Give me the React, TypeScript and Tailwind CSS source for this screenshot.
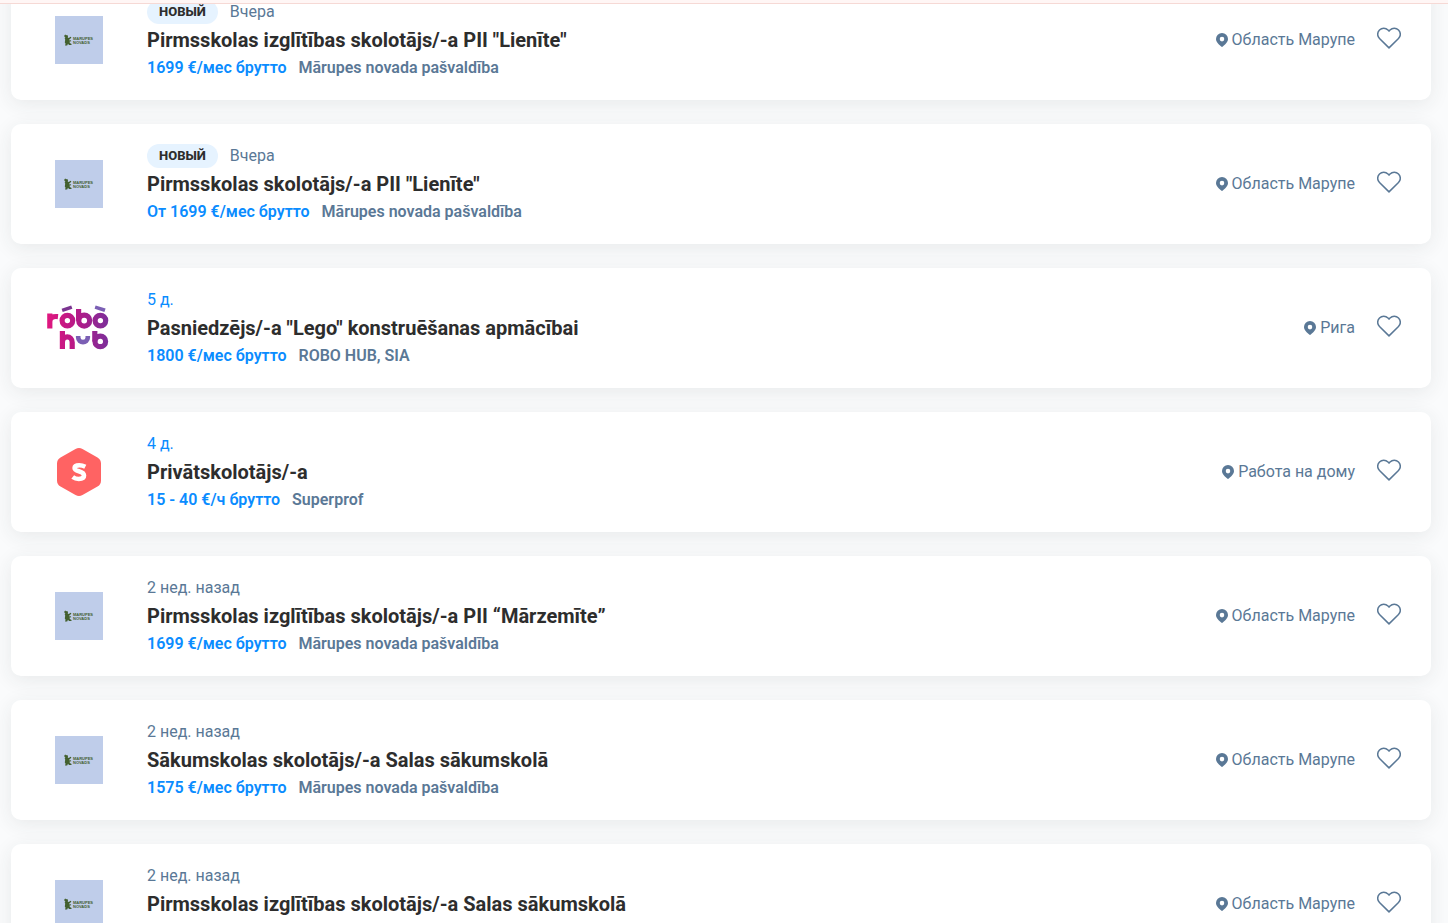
import { useState } from "react";

type Logo = "marupe" | "robohub" | "superprof";

interface Job {
  id: number;
  logo: Logo;
  isNew?: boolean;
  urgent?: boolean;
  date: string;
  title: string;
  salary: string;
  company: string;
  location: string;
}

const jobs: Job[] = [
  { id: 1, logo: "marupe", isNew: true, date: "Вчера", title: 'Pirmsskolas izglītības skolotājs/-a PII "Lienīte"', salary: "1699 €/мес брутто", company: "Mārupes novada pašvaldība", location: "Область Марупе" },
  { id: 2, logo: "marupe", isNew: true, date: "Вчера", title: 'Pirmsskolas skolotājs/-a PII "Lienīte"', salary: "От 1699 €/мес брутто", company: "Mārupes novada pašvaldība", location: "Область Марупе" },
  { id: 3, logo: "robohub", urgent: true, date: "5 д.", title: 'Pasniedzējs/-a "Lego" konstruēšanas apmācībai', salary: "1800 €/мес брутто", company: "ROBO HUB, SIA", location: "Рига" },
  { id: 4, logo: "superprof", urgent: true, date: "4 д.", title: "Privātskolotājs/-a", salary: "15 - 40 €/ч брутто", company: "Superprof", location: "Работа на дому" },
  { id: 5, logo: "marupe", date: "2 нед. назад", title: "Pirmsskolas izglītības skolotājs/-a PII “Mārzemīte”", salary: "1699 €/мес брутто", company: "Mārupes novada pašvaldība", location: "Область Марупе" },
  { id: 6, logo: "marupe", date: "2 нед. назад", title: "Sākumskolas skolotājs/-a Salas sākumskolā", salary: "1575 €/мес брутто", company: "Mārupes novada pašvaldība", location: "Область Марупе" },
  { id: 7, logo: "marupe", date: "2 нед. назад", title: "Pirmsskolas izglītības skolotājs/-a Salas sākumskolā", salary: "1699 €/мес брутто", company: "Mārupes novada pašvaldība", location: "Область Марупе" },
];

function MarupeLogo() {
  return (
    <svg viewBox="0 0 48 48" className="size-12" role="img" aria-label="Mārupes novads">
      <path d="M0 0H48V48H0Z" fill="#bfcdea" />
      <g fill="#43602f">
        <path transform="translate(9 18)" d="M.4 1.2 1.4.4 2 1.2 3.4 1 4 2.600 3.800 4 5.200 3.800 6.400 2.800 7.400 3.200 6.600 4.600 5.400 5.200 5.400 6.400 7 6.200 7.200 7.200 5.600 7.600 5.800 9 7.600 10 7.400 11H5L4 9.800 3.200 11.400H1L1.600 9.800.8 8.600 1.200 5.600.6 4.600 1.400 3.800.4 2.800Z" />
        <g fontFamily="Liberation Sans, sans-serif" fontWeight="700" fontSize="4">
          <text x="18" y="23.500">MĀRUPES</text>
          <text x="18" y="27.800">NOVADS</text>
        </g>
      </g>
    </svg>
  );
}

function RoboHubLogo() {
  return (
    <svg viewBox="0 0 64 46" className="h-[46px] w-16" fill="none" role="img" aria-label="Robo Hub">
      <defs>
        <linearGradient id="robo" gradientUnits="userSpaceOnUse" x1="0" y1="0" x2="62" y2="0">
          <stop offset="0" stopColor="#e0177f" />
          <stop offset="0.5" stopColor="#b31a88" />
          <stop offset="1" stopColor="#7a2f9a" />
        </linearGradient>
      </defs>
      <g stroke="url(#robo)" strokeWidth="5.200">
        <path d="M2.800 23.500V8.500M2.800 17c0-4.200 2.600-6 8.200-5.400" />
        <circle cx="20.400" cy="15.600" r="5.300" />
        <path d="M31.600 4v11.600" />
        <circle cx="37.200" cy="15.600" r="5.500" />
        <circle cx="53.400" cy="15.600" r="5.300" />
        <path d="M15.400 26v18M15.400 37.500c0-7.400 9.800-7.400 9.800 0V44" />
        <path d="M47.800 26v10.500" />
        <circle cx="53.300" cy="36.400" r="5.300" />
      </g>
      <path d="M31.200 31v1.600c0 6 9.600 6 9.600 0V31" stroke="#7b5fb4" strokeWidth="4.600" />
      <path d="m14.600 3.800 9.600-3.400 1.200 3.400-9.700 3.200Z" fill="#7b3490" />
      <path d="m48.600.6 10 3-1.200 3.500-9.800-3.300Z" fill="#7b5fb4" />
    </svg>
  );
}

function SuperprofLogo() {
  return (
    <svg viewBox="0 0 44 48" className="h-12 w-11" role="img" aria-label="Superprof">
      <path d="M18.500 1Q22-1 25.500 1L40.500 9.600Q44 11.600 44 15.600V32.400Q44 36.400 40.500 38.400L25.500 47Q22 49 18.500 47L3.500 38.400Q0 36.400 0 32.400V15.600Q0 11.600 3.500 9.600Z" fill="#ff6363" />
      <path d="M28.300 18.700C26.300 17.700 24.300 17.200 22.300 17.200 19.400 17.200 17.600 18 17.600 19.900 17.600 24.300 27 22 27 27.600 27 30.300 24.800 31 21.800 31 19.500 31 17.300 30.200 15.700 29" fill="none" stroke="#fff" strokeWidth="4.600" />
    </svg>
  );
}

function CompanyLogo({ logo }: { logo: Logo }) {
  if (logo === "robohub") return <RoboHubLogo />;
  if (logo === "superprof") return <SuperprofLogo />;
  return <MarupeLogo />;
}

function PinIcon() {
  return (
    <svg viewBox="0 0 12 14" className="h-[14px] w-3 shrink-0" fill="currentColor" aria-hidden="true">
      <path fillRule="evenodd" d="M6 0a6 6 0 0 1 6 6c0 3.500-3.200 5.400-5.200 7.500a1.100 1.100 0 0 1-1.600 0C3.200 11.400 0 9.500 0 6a6 6 0 0 1 6-6Zm0 3.800a2.300 2.300 0 1 0 0 4.600 2.300 2.300 0 0 0 0-4.600Z" />
    </svg>
  );
}

function HeartIcon({ filled }: { filled: boolean }) {
  return (
    <svg viewBox="0 0 24 22" className="h-[22px] w-6" fill={filled ? "currentColor" : "none"} stroke="currentColor" strokeWidth="1.500" strokeLinejoin="round" aria-hidden="true">
      <path d="M12 20.900 2.500 11.500A5.900 5.900 0 0 1 2.500 3a6 6 0 0 1 8.500 0L12 4.100l1-1.100a6 6 0 0 1 8.500 0 5.900 5.900 0 0 1 0 8.500Z" />
    </svg>
  );
}

function JobCard({ job }: { job: Job }) {
  const [saved, setSaved] = useState(false);
  return (
    <li className="flex items-center rounded-[10px] bg-white py-5 pr-[30px] shadow-[0_4px_20px_rgba(40,50,60,0.09)]">
      <div className="flex w-[136px] shrink-0 items-center justify-center">
        <CompanyLogo logo={job.logo} />
      </div>
      <div className="min-w-0 flex-1">
        <div className="flex h-6 items-center gap-3">
          {job.isNew && (
            <span className="rounded-full bg-[#e6f3ff] px-3 text-[13px] leading-6 font-extrabold text-[#2d2d2d]">НОВЫЙ</span>
          )}
          <span className={job.urgent ? "text-[#0a8cff]" : "text-[#5a7896]"}>{job.date}</span>
        </div>
        <h2 className="text-xl leading-8 font-bold text-[#2d2d2d]">
          <a href={`#job-${job.id}`}>{job.title}</a>
        </h2>
        <div className="flex gap-3 leading-6 font-semibold">
          <span className="text-[#0a8cff]">{job.salary}</span>
          <span className="text-[#5a7896]">{job.company}</span>
        </div>
      </div>
      <div className="flex items-center gap-1 text-[#5a7896]">
        <PinIcon />
        <span>{job.location}</span>
      </div>
      <button
        type="button"
        aria-label="Сохранить вакансию"
        aria-pressed={saved}
        onClick={() => setSaved(!saved)}
        className="ml-[22px] cursor-pointer pb-1 text-[#5a7896]"
      >
        <HeartIcon filled={saved} />
      </button>
    </li>
  );
}

export default function App() {
  return (
    <div className="flex h-screen flex-col overflow-hidden bg-[#fafbfc] font-['Roboto',sans-serif] text-base">
      <div className="z-10 h-1 shrink-0 border-b border-[#f6d9d5] bg-[#fff6f5]" />
      <main className="min-h-0 flex-1 overflow-hidden pr-[17px] pl-[11px]">
        <ul className="-mt-6 flex flex-col gap-6">
          {jobs.map((job) => (
            <JobCard key={job.id} job={job} />
          ))}
        </ul>
      </main>
    </div>
  );
}
